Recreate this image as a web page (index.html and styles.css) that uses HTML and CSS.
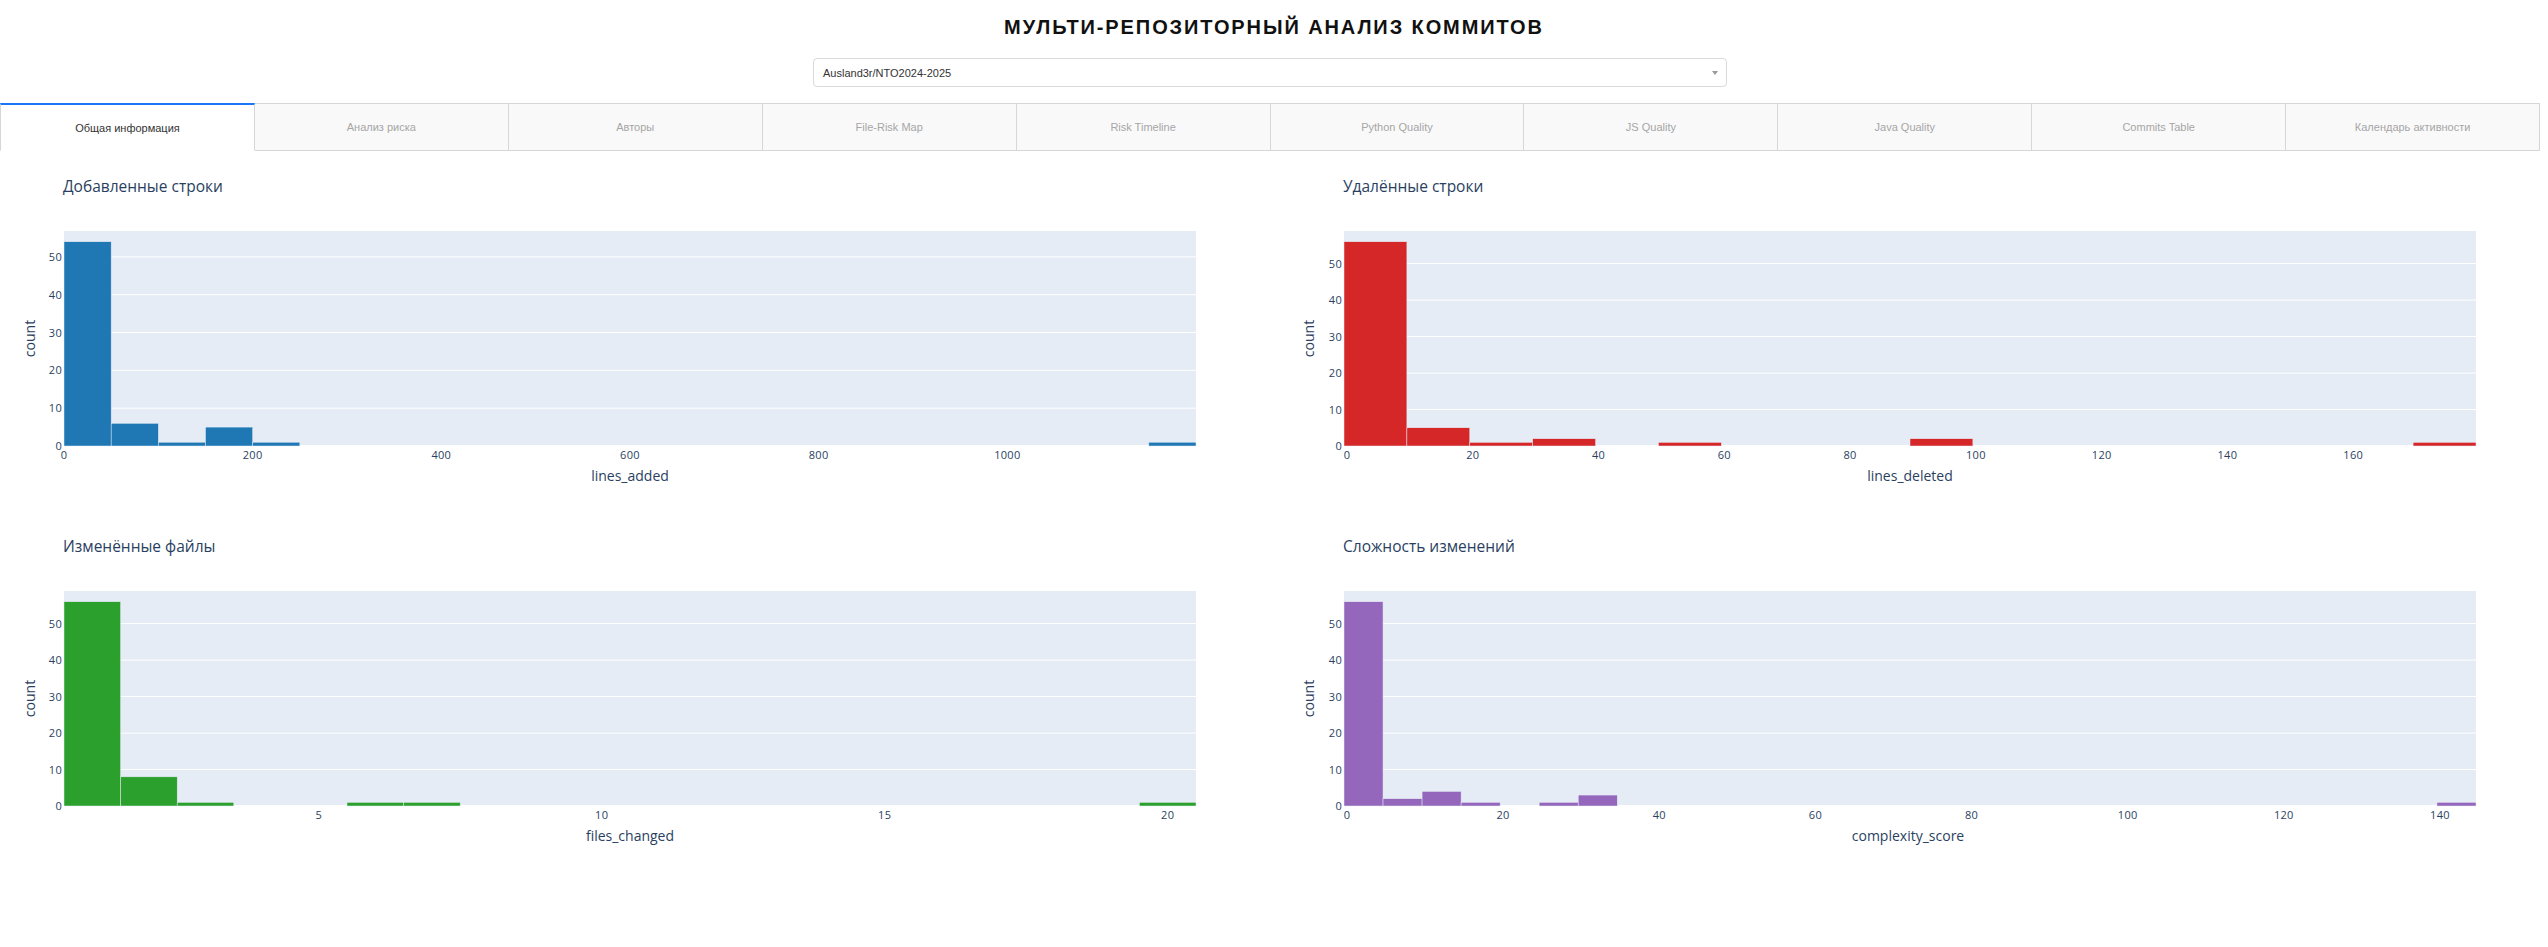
FILE: index.html
```html
<!DOCTYPE html>
<html lang="ru">
<head>
<meta charset="utf-8">
<title>Мульти-репозиторный анализ коммитов</title>
<link rel="stylesheet" href="styles.css">
</head>
<body>
<div class="app">
  <h1 class="page-title">МУЛЬТИ-РЕПОЗИТОРНЫЙ АНАЛИЗ КОММИТОВ</h1>
  <div class="dropdown">
    <span class="dropdown-value">Ausland3r/NTO2024-2025</span>
    <span class="dropdown-arrow"></span>
  </div>
  <div class="tabs">
    <div class="tab tab-selected">Общая информация</div>
    <div class="tab">Анализ риска</div>
    <div class="tab">Авторы</div>
    <div class="tab">File-Risk Map</div>
    <div class="tab">Risk Timeline</div>
    <div class="tab">Python Quality</div>
    <div class="tab">JS Quality</div>
    <div class="tab">Java Quality</div>
    <div class="tab">Commits Table</div>
    <div class="tab">Календарь активности</div>
  </div>
  <div class="charts">
    <div class="chart">
      <svg class="plot" viewBox="0 0 1274 360" width="1274" height="360">
        <text class="chart-title" x="63" y="41">Добавленные строки</text>
        <rect class="plot-bg" x="64" y="80" width="1132" height="215"/>
        <g class="grid">
          <line x1="64" x2="1196" y1="257.2" y2="257.2"/>
          <line x1="64" x2="1196" y1="219.4" y2="219.4"/>
          <line x1="64" x2="1196" y1="181.5" y2="181.5"/>
          <line x1="64" x2="1196" y1="143.7" y2="143.7"/>
          <line x1="64" x2="1196" y1="105.9" y2="105.9"/>
        </g>
        <line class="zeroline" x1="64" x2="1196" y1="295" y2="295"/>
        <g class="bars bars-blue">
          <rect x="64" y="90.75" width="47.17" height="204.25"/>
          <rect x="111.17" y="272.31" width="47.17" height="22.69"/>
          <rect x="158.33" y="291.22" width="47.17" height="3.78"/>
          <rect x="205.5" y="276.09" width="47.17" height="18.91"/>
          <rect x="252.67" y="291.22" width="47.17" height="3.78"/>
          <rect x="1148.83" y="291.22" width="47.17" height="3.78"/>
        </g>
        <g class="tick ytick">
          <text x="62" y="299">0</text>
          <text x="62" y="261.2">10</text>
          <text x="62" y="223.4">20</text>
          <text x="62" y="185.5">30</text>
          <text x="62" y="147.7">40</text>
          <text x="62" y="109.9">50</text>
        </g>
        <g class="tick xtick">
          <text x="64" y="307.5">0</text>
          <text x="252.67" y="307.5">200</text>
          <text x="441.33" y="307.5">400</text>
          <text x="630" y="307.5">600</text>
          <text x="818.67" y="307.5">800</text>
          <text x="1007.33" y="307.5">1000</text>
        </g>
        <text class="axis-title" x="630" y="330">lines_added</text>
        <text class="axis-title" x="34.5" y="187.5" transform="rotate(-90 34.5 187.5)">count</text>
      </svg>
    </div>
    <div class="chart">
      <svg class="plot" viewBox="0 0 1274 360" width="1274" height="360">
        <text class="chart-title" x="69" y="41">Удалённые строки</text>
        <rect class="plot-bg" x="70" y="80" width="1132" height="215"/>
        <g class="grid">
          <line x1="70" x2="1202" y1="258.5" y2="258.5"/>
          <line x1="70" x2="1202" y1="222.1" y2="222.1"/>
          <line x1="70" x2="1202" y1="185.6" y2="185.6"/>
          <line x1="70" x2="1202" y1="149.1" y2="149.1"/>
          <line x1="70" x2="1202" y1="112.6" y2="112.6"/>
        </g>
        <line class="zeroline" x1="70" x2="1202" y1="295" y2="295"/>
        <g class="bars bars-red">
          <rect x="70" y="90.75" width="62.89" height="204.25"/>
          <rect x="132.89" y="276.76" width="62.89" height="18.24"/>
          <rect x="195.78" y="291.35" width="62.89" height="3.65"/>
          <rect x="258.67" y="287.71" width="62.89" height="7.29"/>
          <rect x="384.44" y="291.35" width="62.89" height="3.65"/>
          <rect x="636" y="287.71" width="62.89" height="7.29"/>
          <rect x="1139.11" y="291.35" width="62.89" height="3.65"/>
        </g>
        <g class="tick ytick">
          <text x="68" y="299">0</text>
          <text x="68" y="262.5">10</text>
          <text x="68" y="226.1">20</text>
          <text x="68" y="189.6">30</text>
          <text x="68" y="153.1">40</text>
          <text x="68" y="116.6">50</text>
        </g>
        <g class="tick xtick">
          <text x="73" y="307.5">0</text>
          <text x="198.8" y="307.5">20</text>
          <text x="324.6" y="307.5">40</text>
          <text x="450.3" y="307.5">60</text>
          <text x="576.1" y="307.5">80</text>
          <text x="701.9" y="307.5">100</text>
          <text x="827.7" y="307.5">120</text>
          <text x="953.4" y="307.5">140</text>
          <text x="1079.2" y="307.5">160</text>
        </g>
        <text class="axis-title" x="636" y="330">lines_deleted</text>
        <text class="axis-title" x="40" y="187.5" transform="rotate(-90 40 187.5)">count</text>
      </svg>
    </div>
    <div class="chart">
      <svg class="plot" viewBox="0 0 1274 360" width="1274" height="360">
        <text class="chart-title" x="63" y="41">Изменённые файлы</text>
        <rect class="plot-bg" x="64" y="80" width="1132" height="215"/>
        <g class="grid">
          <line x1="64" x2="1196" y1="258.5" y2="258.5"/>
          <line x1="64" x2="1196" y1="222.1" y2="222.1"/>
          <line x1="64" x2="1196" y1="185.6" y2="185.6"/>
          <line x1="64" x2="1196" y1="149.1" y2="149.1"/>
          <line x1="64" x2="1196" y1="112.6" y2="112.6"/>
        </g>
        <line class="zeroline" x1="64" x2="1196" y1="295" y2="295"/>
        <g class="bars bars-green">
          <rect x="64" y="90.75" width="56.6" height="204.25"/>
          <rect x="120.6" y="265.82" width="56.6" height="29.18"/>
          <rect x="177.2" y="291.35" width="56.6" height="3.65"/>
          <rect x="347" y="291.35" width="56.6" height="3.65"/>
          <rect x="403.6" y="291.35" width="56.6" height="3.65"/>
          <rect x="1139.4" y="291.35" width="56.6" height="3.65"/>
        </g>
        <g class="tick ytick">
          <text x="62" y="299">0</text>
          <text x="62" y="262.5">10</text>
          <text x="62" y="226.1">20</text>
          <text x="62" y="189.6">30</text>
          <text x="62" y="153.1">40</text>
          <text x="62" y="116.6">50</text>
        </g>
        <g class="tick xtick">
          <text x="318.7" y="307.5">5</text>
          <text x="601.7" y="307.5">10</text>
          <text x="884.7" y="307.5">15</text>
          <text x="1167.7" y="307.5">20</text>
        </g>
        <text class="axis-title" x="630" y="330">files_changed</text>
        <text class="axis-title" x="34.5" y="187.5" transform="rotate(-90 34.5 187.5)">count</text>
      </svg>
    </div>
    <div class="chart">
      <svg class="plot" viewBox="0 0 1274 360" width="1274" height="360">
        <text class="chart-title" x="69" y="41">Сложность изменений</text>
        <rect class="plot-bg" x="70" y="80" width="1132" height="215"/>
        <g class="grid">
          <line x1="70" x2="1202" y1="258.5" y2="258.5"/>
          <line x1="70" x2="1202" y1="222.1" y2="222.1"/>
          <line x1="70" x2="1202" y1="185.6" y2="185.6"/>
          <line x1="70" x2="1202" y1="149.1" y2="149.1"/>
          <line x1="70" x2="1202" y1="112.6" y2="112.6"/>
        </g>
        <line class="zeroline" x1="70" x2="1202" y1="295" y2="295"/>
        <g class="bars bars-purple">
          <rect x="70" y="90.75" width="39.03" height="204.25"/>
          <rect x="109.03" y="287.71" width="39.03" height="7.29"/>
          <rect x="148.07" y="280.41" width="39.03" height="14.59"/>
          <rect x="187.1" y="291.35" width="39.03" height="3.65"/>
          <rect x="265.17" y="291.35" width="39.03" height="3.65"/>
          <rect x="304.21" y="284.06" width="39.03" height="10.94"/>
          <rect x="1162.97" y="291.35" width="39.03" height="3.65"/>
        </g>
        <g class="tick ytick">
          <text x="68" y="299">0</text>
          <text x="68" y="262.5">10</text>
          <text x="68" y="226.1">20</text>
          <text x="68" y="189.6">30</text>
          <text x="68" y="153.1">40</text>
          <text x="68" y="116.6">50</text>
        </g>
        <g class="tick xtick">
          <text x="73" y="307.5">0</text>
          <text x="229.1" y="307.5">20</text>
          <text x="385.3" y="307.5">40</text>
          <text x="541.4" y="307.5">60</text>
          <text x="697.6" y="307.5">80</text>
          <text x="853.7" y="307.5">100</text>
          <text x="1009.8" y="307.5">120</text>
          <text x="1166" y="307.5">140</text>
        </g>
        <text class="axis-title" x="634" y="330">complexity_score</text>
        <text class="axis-title" x="40" y="187.5" transform="rotate(-90 40 187.5)">count</text>
      </svg>
    </div>
  </div>
</div>
</body>
</html>
```

FILE: styles.css
```css
html, body {
  margin: 0;
  padding: 0;
  background: #ffffff;
}

body {
  font-family: "Liberation Sans", Arial, sans-serif;
}

.page-title {
  margin: 15px 0 19px;
  font-size: 20px;
  line-height: 24px;
  font-weight: bold;
  letter-spacing: 1.9px;
  text-align: center;
  color: #111111;
}

.dropdown {
  box-sizing: border-box;
  width: 914px;
  height: 29px;
  margin-left: calc(50% - 461px);
  border: 1px solid #d9d9d9;
  border-radius: 4px;
  display: flex;
  align-items: center;
  justify-content: space-between;
  padding: 0 8px 0 9px;
  background: #ffffff;
}

.dropdown-value {
  font-size: 11px;
  color: #333333;
}

.dropdown-arrow {
  width: 0;
  height: 0;
  border-style: solid;
  border-width: 4px 3.5px 0 3.5px;
  border-color: #999999 transparent transparent transparent;
}

.tabs {
  display: flex;
  margin: 16px 8px 0 0;
}

.tab {
  flex: 1 1 0;
  height: 48px;
  box-sizing: border-box;
  display: flex;
  align-items: center;
  justify-content: center;
  background: #f9f9f9;
  border-top: 1px solid #d6d6d6;
  border-bottom: 1px solid #d6d6d6;
  border-right: 1px solid #d6d6d6;
  font-size: 11px;
  color: #a6a6a6;
  white-space: nowrap;
}

.tab:first-child {
  border-left: 1px solid #d6d6d6;
}

.tab-selected {
  background: #ffffff;
  border-top: 2px solid #1975fa;
  border-bottom-color: #ffffff;
  color: #333333;
}

.charts {
  display: grid;
  grid-template-columns: 1fr 1fr;
}

.chart .plot {
  display: block;
  width: 1274px;
  height: 360px;
}

.plot text {
  font-family: "Open Sans", Verdana, Arial, sans-serif;
  fill: #2a3f5f;
}

.plot-bg {
  fill: #e5ecf6;
}

.grid line {
  stroke: #ffffff;
  stroke-width: 1;
}

.zeroline {
  stroke: #ffffff;
  stroke-width: 2;
}

.bars rect {
  stroke: #e5ecf6;
  stroke-width: 0.5;
}

.bars-blue rect { fill: #1f77b4; }
.bars-red rect { fill: #d62728; }
.bars-green rect { fill: #2ca02c; }
.bars-purple rect { fill: #9467bd; }

.plot .tick text {
  font-size: 11px;
  letter-spacing: 0.3px;
}

.ytick text {
  text-anchor: end;
}

.xtick text {
  text-anchor: middle;
}

.plot .chart-title {
  font-size: 15.5px;
}

.plot .axis-title {
  font-size: 14px;
  text-anchor: middle;
}
```
